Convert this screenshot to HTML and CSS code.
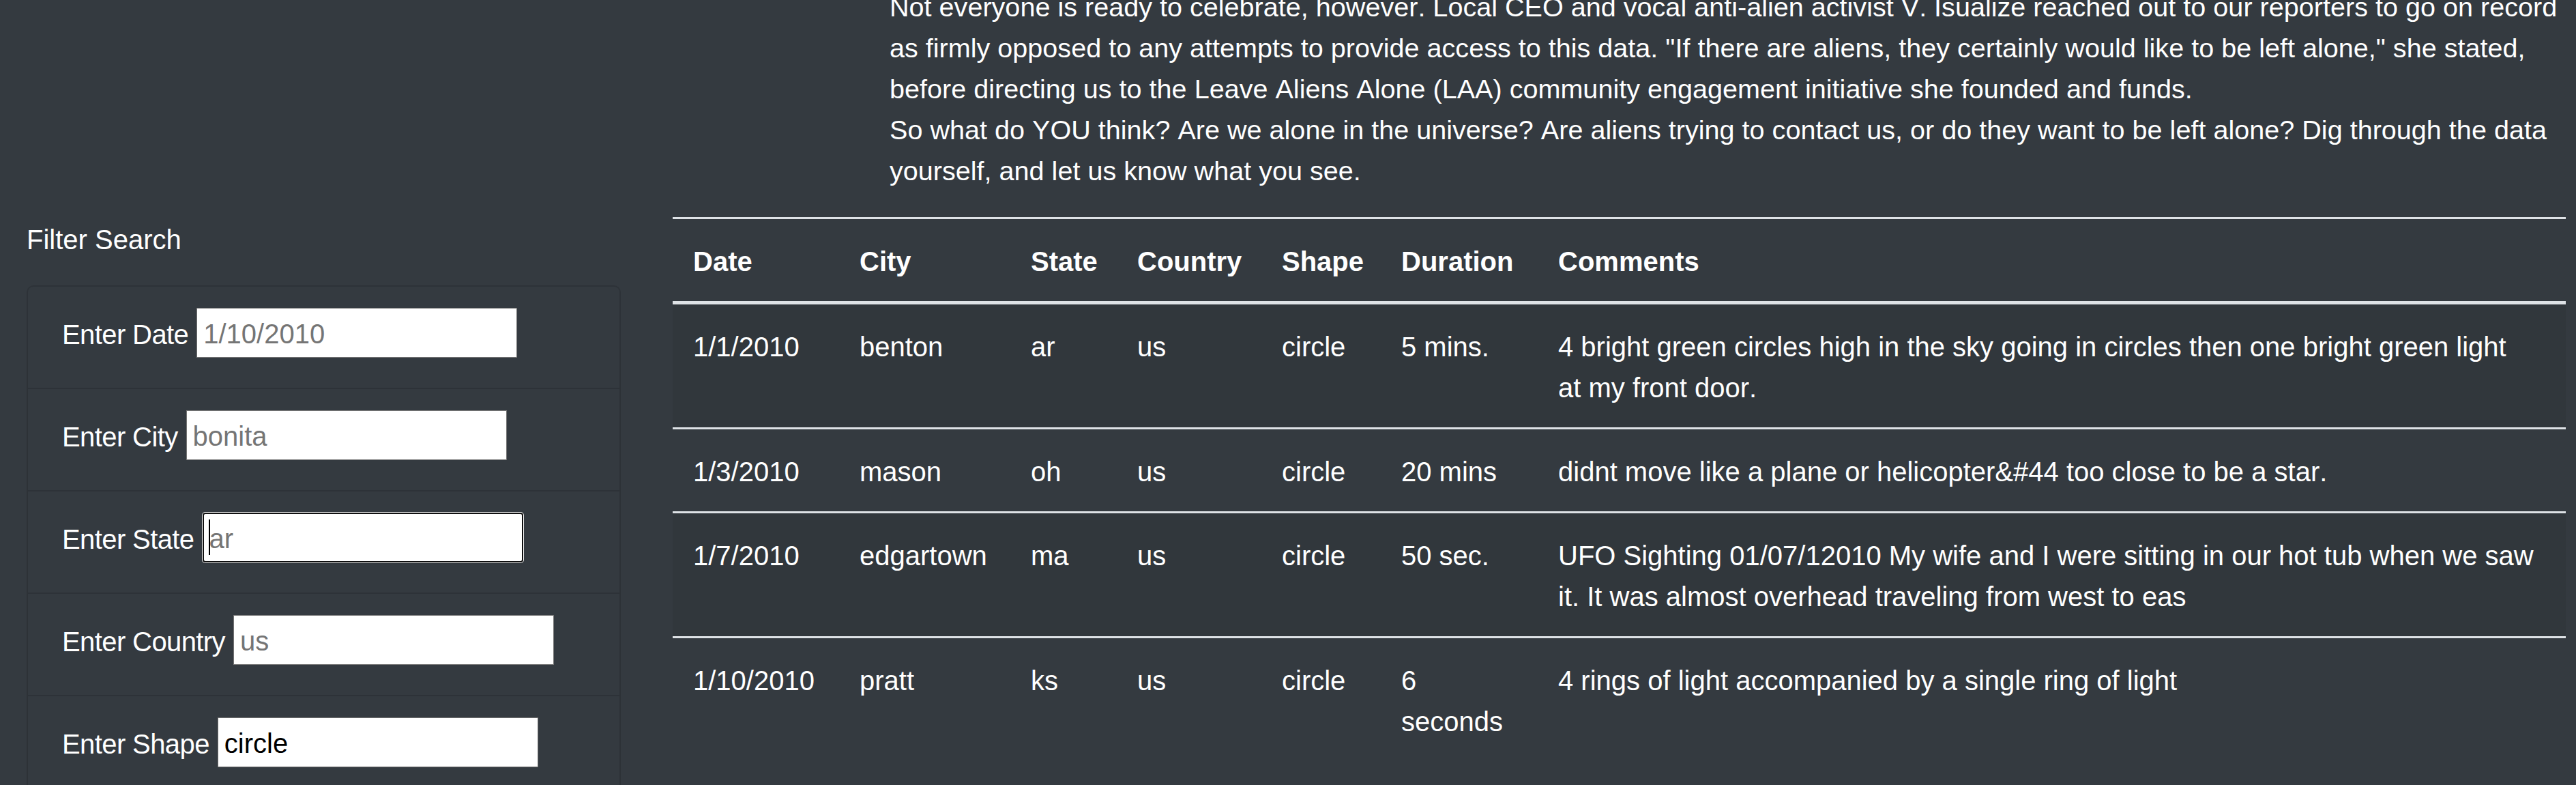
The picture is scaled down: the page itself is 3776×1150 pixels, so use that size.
FILE: index.html
```html
<!DOCTYPE html>
<html lang="en">
<head>
<meta charset="utf-8">
<title>UFO Sightings</title>
<link rel="stylesheet" href="styles.css">
</head>
<body>
<div class="page">
  <section class="story">
    <p>Not everyone is ready to celebrate, however. Local CEO and vocal anti-alien activist V. Isualize reached out to our reporters to go on record as firmly opposed to any attempts to provide access to this data. "If there are aliens, they certainly would like to be left alone," she stated, before directing us to the Leave Aliens Alone (LAA) community engagement initiative she founded and funds.</p>
    <p>So what do YOU think? Are we alone in the universe? Are aliens trying to contact us, or do they want to be left alone? Dig through the data yourself, and let us know what you see.</p>
  </section>
  <div class="main">
    <aside class="filters">
      <div class="filters-title">Filter Search</div>
      <ul class="filter-list">
        <li class="filter-item">
          <label class="filter-label" for="datetime">Enter Date</label>
          <input class="filter-input" id="datetime" type="text" placeholder="1/10/2010">
        </li>
        <li class="filter-item">
          <label class="filter-label" for="city">Enter City</label>
          <input class="filter-input" id="city" type="text" placeholder="bonita">
        </li>
        <li class="filter-item">
          <label class="filter-label" for="state">Enter State</label>
          <span class="input-wrap">
            <input class="filter-input filter-input--focus" id="state" type="text" placeholder="ar">
            <span class="caret"></span>
          </span>
        </li>
        <li class="filter-item">
          <label class="filter-label" for="country">Enter Country</label>
          <input class="filter-input" id="country" type="text" placeholder="us">
        </li>
        <li class="filter-item">
          <label class="filter-label" for="shape">Enter Shape</label>
          <input class="filter-input" id="shape" type="text" value="circle">
        </li>
      </ul>
    </aside>
    <section class="results">
      <table class="ufo-table">
        <thead>
          <tr>
            <th class="col-date">Date</th>
            <th class="col-city">City</th>
            <th class="col-state">State</th>
            <th class="col-country">Country</th>
            <th class="col-shape">Shape</th>
            <th class="col-duration">Duration</th>
            <th class="col-comments">Comments</th>
          </tr>
        </thead>
        <tbody>
          <tr>
            <td>1/1/2010</td>
            <td>benton</td>
            <td>ar</td>
            <td>us</td>
            <td>circle</td>
            <td>5 mins.</td>
            <td class="col-comments">4 bright green circles high in the sky going in circles then one bright green light at my front door.</td>
          </tr>
          <tr>
            <td>1/3/2010</td>
            <td>mason</td>
            <td>oh</td>
            <td>us</td>
            <td>circle</td>
            <td>20 mins</td>
            <td class="col-comments">didnt move like a plane or helicopter&amp;#44 too close to be a star.</td>
          </tr>
          <tr>
            <td>1/7/2010</td>
            <td>edgartown</td>
            <td>ma</td>
            <td>us</td>
            <td>circle</td>
            <td>50 sec.</td>
            <td class="col-comments">UFO Sighting 01/07/12010 My wife and I were sitting in our hot tub when we saw it. It was almost overhead traveling from west to eas</td>
          </tr>
          <tr>
            <td>1/10/2010</td>
            <td>pratt</td>
            <td>ks</td>
            <td>us</td>
            <td>circle</td>
            <td>6 seconds</td>
            <td class="col-comments">4 rings of light accompanied by a single ring of light</td>
          </tr>
        </tbody>
      </table>
    </section>
  </div>
</div>
</body>
</html>
```

FILE: styles.css
```css
html {
  overflow: hidden;
}

body {
  margin: 0;
  background: #343a40;
  color: #fff;
  font-family: "Liberation Sans", Arial, sans-serif;
  font-size: 40px;
  line-height: 60px;
  font-kerning: none;
}

.story {
  margin: -20px 0 38px 1304px;
  width: 2460px;
  font-size: 39.6px;
}

.story p {
  margin: 0;
}

.main {
  display: flex;
  align-items: flex-start;
  gap: 76px;
  padding-left: 39px;
}

.filters {
  flex: none;
  width: 871px;
}

.filters-title {
  margin: 3px 0 37px;
}

.filter-list {
  list-style: none;
  margin: 0;
  padding: 0;
  border: 2px solid rgba(0, 0, 0, 0.125);
  border-bottom: none;
  border-radius: 10px 10px 0 0;
}

.filter-item {
  display: flex;
  align-items: center;
  gap: 12px;
  padding: 31px 50px 44px;
}

.filter-item + .filter-item {
  border-top: 2px solid rgba(0, 0, 0, 0.125);
}

.filter-label {
  padding-top: 4px;
  letter-spacing: -0.6px;
  white-space: nowrap;
}

.filter-input {
  box-sizing: border-box;
  width: 470px;
  height: 73px;
  margin: 0;
  padding: 3px 9px 0;
  border: 1px solid #767676;
  border-radius: 0;
  background: #fff;
  color: #000;
  font-family: "Liberation Sans", Arial, sans-serif;
  font-size: 40px;
  line-height: normal;
  outline: none;
}

.filter-input::placeholder {
  color: #757575;
  opacity: 1;
}

.input-wrap {
  position: relative;
  display: flex;
}

.filter-input--focus {
  border: 2px solid #101010;
  border-radius: 4px;
  box-shadow: 0 0 0 1px #fff;
  padding-left: 8px;
}

.caret {
  position: absolute;
  left: 9px;
  top: 10px;
  width: 2px;
  height: 52px;
  background: #000;
}

.results {
  flex: none;
  width: 2775px;
}

.ufo-table {
  width: 100%;
  border-collapse: collapse;
  table-layout: fixed;
}

.ufo-table th,
.ufo-table td {
  box-sizing: border-box;
  padding: 32px 30px 28px;
  border-top: 3px solid #dee2e6;
  text-align: left;
  vertical-align: top;
}

.ufo-table th {
  vertical-align: bottom;
  border-bottom: 5px solid #dee2e6;
  font-weight: 700;
}

.ufo-table tbody tr:nth-child(odd) {
  background: rgba(0, 0, 0, 0.05);
}

.col-date { width: 244px; }
.col-city { width: 251px; }
.col-state { width: 156px; }
.col-country { width: 212px; }
.col-shape { width: 175px; }
.col-duration { width: 230px; }

.ufo-table .col-comments {
  padding-right: 45px;
}
```
